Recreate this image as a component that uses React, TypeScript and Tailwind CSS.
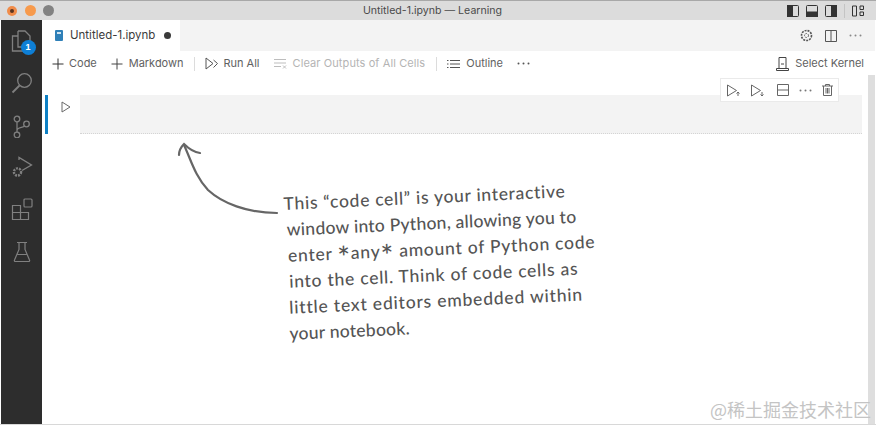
import { ReactNode } from 'react';

const Svg = ({ size = 16, w, h, children, className = '' }: { size?: number; w?: number; h?: number; children: ReactNode; className?: string }) => (
  <svg
    width={w ?? size}
    height={h ?? size}
    viewBox={`0 0 ${w ?? size} ${h ?? size}`}
    fill="none"
    stroke="currentColor"
    strokeWidth="1"
    className={`shrink-0 ${className}`}
  >
    {children}
  </svg>
);

const Plus = () => (
  <Svg size={12}>
    <path d="M6 0.5v11M0.5 6h11" />
  </Svg>
);

const Dots = ({ className = '' }: { className?: string }) => (
  <svg width="13" height="3" viewBox="0 0 13 3" fill="currentColor" className={`shrink-0 ${className}`}>
    <circle cx="1.5" cy="1.5" r="1" />
    <circle cx="6.5" cy="1.5" r="1" />
    <circle cx="11.5" cy="1.5" r="1" />
  </svg>
);

function ActivityBar() {
  return (
    <div className="w-[41px] ml-px shrink-0 bg-[#2d2d2d] flex flex-col items-center text-[#808080]">
      {/* explorer */}
      <div className="relative mt-[10px] h-[24px]">
        <Svg w={22} h={24}>
          <path d="M7 1h7l5 5v11h-5M7 1v5H1.5v15H14v-4M7 6v11h7" strokeWidth="1.3" />
        </Svg>
        <div className="absolute left-[10px] top-[10px] w-[15px] h-[15px] rounded-full bg-[#0e7fd6] text-white text-[9px] font-bold flex items-center justify-center font-['Liberation_Sans',sans-serif]">
          1
        </div>
      </div>
      {/* search */}
      <Svg w={22} h={22} className="mt-[18px]">
        <circle cx="13.5" cy="8.5" r="6.8" strokeWidth="1.3" />
        <path d="M8.5 13.5L1.5 20.5" strokeWidth="1.8" />
      </Svg>
      {/* source control */}
      <Svg w={20} h={23} className="mt-[21px]">
        <circle cx="5" cy="4" r="2.8" strokeWidth="1.3" />
        <circle cx="5" cy="20" r="2.8" strokeWidth="1.3" />
        <circle cx="14.5" cy="9" r="2.8" strokeWidth="1.3" />
        <path d="M5 7v10M5 15.5c0-3.5 6.5-2.5 7.5-4.5" strokeWidth="1.3" />
      </Svg>
      {/* run and debug */}
      <Svg w={22} h={22} className="mt-[18px]">
        <path d="M8 4V1.5L20.5 9 11 14.5" strokeWidth="1.3" />
        <circle cx="6.5" cy="16" r="3.6" strokeWidth="2.4" strokeDasharray="2 1" />
      </Svg>
      {/* extensions */}
      <Svg w={22} h={22} className="mt-[20px]">
        <path d="M1.5 7.5h8v14h-8zM1.5 14.5h16v7h-8M9.5 14.5v-7" strokeWidth="1.2" />
        <rect x="13" y="1" width="8" height="8" rx="1" strokeWidth="1.2" />
      </Svg>
      {/* testing flask */}
      <Svg w={18} h={22} className="mt-[21px]">
        <path d="M4 1.5h10M6 1.5v7L1.5 19a1 1 0 0 0 1 1.5h13a1 1 0 0 0 1-1.5L12 8.5v-7M4.5 13.5h9" strokeWidth="1.2" />
      </Svg>
    </div>
  );
}

function TitleBar() {
  return (
    <div className="h-[19px] shrink-0 bg-[#dcdcdc] flex items-center pl-[7px] pr-[12px]">
      <div className="w-[10px] h-[10px] rounded-full bg-[#f08c4a] flex items-center justify-center">
        <div className="w-[4px] h-[4px] rounded-full bg-[#5a3420]" />
      </div>
      <div className="w-[11px] h-[11px] rounded-full bg-[#f79a4c] ml-[8px]" />
      <div className="w-[11px] h-[11px] rounded-full bg-[#828282] ml-[7px]" />
      <div className="flex-1 text-center text-[10.6px] text-[#4a4a4a] pl-[24px]">Untitled-1.ipynb — Learning</div>
      <div className="flex items-center text-[#333]">
        <Svg w={12} h={12}>
          <rect x="0.5" y="0.5" width="11" height="11" rx="1" />
          <rect x="0.5" y="0.5" width="5" height="11" fill="currentColor" />
        </Svg>
        <Svg w={12} h={12} className="ml-[7px]">
          <rect x="0.5" y="0.5" width="11" height="11" rx="1" />
          <rect x="0.5" y="7" width="11" height="4.5" fill="currentColor" />
        </Svg>
        <Svg w={12} h={12} className="ml-[7px]">
          <rect x="0.5" y="0.5" width="11" height="11" rx="1" />
          <rect x="6.5" y="0.5" width="5" height="11" fill="currentColor" />
        </Svg>
        <div className="w-px h-[14px] bg-[#c4c4c4] ml-[7px]" />
        <Svg w={12} h={12} className="ml-[7px]">
          <path d="M0.5 1h4v10h-4zM8 1h3.5v3.5H8zM8 7h3.5v3.5H8z" />
        </Svg>
      </div>
    </div>
  );
}

function TabBar() {
  return (
    <div className="h-[31px] shrink-0 bg-[#f3f3f3] flex items-stretch">
      <div className="w-[138px] bg-white flex items-center pl-[13px]">
        <svg width="8" height="11" viewBox="0 0 8 11" className="shrink-0">
          <rect width="8" height="11" rx="1" fill="#2f80b8" />
          <rect x="2" y="2" width="4" height="2" fill="#cfe4f2" />
        </svg>
        <span className="ml-[7px] text-[11.5px] text-[#3b3b3b]">Untitled-1.ipynb</span>
        <div className="ml-[9px] w-[7px] h-[7px] rounded-full bg-[#3a3a3a]" />
      </div>
      <div className="flex-1" />
      <div className="flex items-center gap-[12px] pr-[13px] text-[#555]">
        <Svg w={13} h={13}>
          <circle cx="6.5" cy="6.5" r="2" strokeDasharray="1.5 1" />
          <circle cx="6.5" cy="6.5" r="5" strokeWidth="1.6" strokeDasharray="2 1" />
        </Svg>
        <Svg w={12} h={12}>
          <path d="M0.5 0.5h11v11h-11zM6 0.5v11" />
        </Svg>
        <Dots className="text-[#888]" />
      </div>
    </div>
  );
}

function Toolbar() {
  return (
    <div className="h-[23px] shrink-0 flex items-center pt-[2px] pl-[10px] pr-[11px] text-[11px] text-[#616161]">
      <span className="text-[#333]">
        <Plus />
      </span>
      <span className="ml-[5px]">Code</span>
      <span className="ml-[14px] text-[#444]">
        <Plus />
      </span>
      <span className="ml-[6px] tracking-[-0.03px]">Markdown</span>
      <div className="ml-[11px] w-px h-[14px] bg-[#dcdcdc]" />
      <Svg w={13} h={13} className="ml-[10px] text-[#555]">
        <path d="M1 1v11l7-5.5zM8.5 3l4 3.5-4 4" />
      </Svg>
      <span className="ml-[5px]">Run All</span>
      <Svg w={13} h={11} className="ml-[14px] text-[#bdbdbd]">
        <path d="M0 1.5h12M0 5h12M0 8.5h7M9 7.5l3 3M12 7.5l-3 3" />
      </Svg>
      <span className="ml-[6px] text-[#b4b4b4] tracking-[0.1px]">Clear Outputs of All Cells</span>
      <div className="ml-[11px] w-px h-[14px] bg-[#dcdcdc]" />
      <Svg w={13} h={10} className="ml-[10px] text-[#555]">
        <path d="M3 1.5h10M3 5h10M3 8.5h10M0 1.5h1.5M0 5h1.5M0 8.5h1.5" />
      </Svg>
      <span className="ml-[6px]">Outline</span>
      <Dots className="ml-[14px] text-[#555]" />
      <div className="flex-1" />
      <Svg w={13} h={14} className="text-[#444]">
        <path d="M3 0.5h7v11H3zM5 7h3M0.5 13.5h12" />
        <path d="M0.5 13.5v-2h2.5M12.5 13.5v-2H10" />
      </Svg>
      <span className="ml-[6px] text-[#616161]">Select Kernel</span>
    </div>
  );
}

function Cell() {
  return (
    <div className="relative mt-[21px] flex pl-[3px] pr-[13px]">
      <div className="w-[3px] h-[39px] bg-[#0e80c4]" />
      <div className="w-[32px] pl-[13px] pt-[6px] text-[#6a6a6a]">
        <Svg w={10} h={12}>
          <path d="M1 1v10l8-5z" />
        </Svg>
      </div>
      <div className="flex-1 h-[39px] bg-[#f3f3f3] border-b border-dotted border-[#d4d4d4]" />
      {/* cell toolbar */}
      <div className="absolute right-[36px] top-[-17px] h-[24px] w-[119px] bg-white border border-[#eaeaea] flex items-center pl-[6px] text-[#666]">
        <Svg w={14} h={13}>
          <path d="M0.5 1v11l9-5.5zM11 12V8M9.5 9.5L11 8l1.5 1.5" />
        </Svg>
        <Svg w={14} h={13} className="ml-[10px]">
          <path d="M0.5 1v11l9-5.5zM11 8v4M9.5 10.5L11 12l1.5-1.5" />
        </Svg>
        <Svg w={12} h={12} className="ml-[12px]">
          <path d="M0.5 0.5h11v11h-11zM0.5 6h11" />
        </Svg>
        <Dots className="ml-[10px] text-[#777]" />
        <Svg w={11} h={12} className="ml-[10px]">
          <path d="M0 2h11M3.5 2V0.5h4V2M1.5 2v9.5h8V2M4 4v5.5M5.5 4v5.5M7 4v5.5" />
        </Svg>
      </div>
    </div>
  );
}

const Star = () => <span className="text-[30px] leading-[0] align-[-9px]">*</span>;

const notes: { id: string; cls: string; content: ReactNode }[] = [
  { id: 'a', cls: 'tracking-[0.7px]', content: 'This “code cell” is your interactive' },
  { id: 'b', cls: 'ml-[2px] tracking-[0.25px]', content: 'window into Python, allowing you to' },
  {
    id: 'c',
    cls: 'ml-[2px] tracking-[0.75px]',
    content: (
      <>
        enter <Star />any<Star /> amount of Python code
      </>
    ),
  },
  { id: 'd', cls: 'ml-[2px] tracking-[0.75px]', content: 'into the cell. Think of code cells as' },
  { id: 'e', cls: 'ml-[1px] tracking-[0.8px]', content: 'little text editors embedded within' },
  { id: 'f', cls: 'tracking-[0.25px]', content: 'your notebook.' },
];

export default function App() {
  return (
    <div className="relative w-[876px] h-[425px] overflow-hidden bg-white flex flex-col border-t border-[#a8a8a8] font-['Inter','Liberation_Sans',sans-serif]">
      <TitleBar />
      <div className="flex flex-1 min-h-0">
        <ActivityBar />
        <div className="flex-1 min-w-0 flex flex-col pr-[1px]">
          <TabBar />
          <Toolbar />
          <Cell />
        </div>
      </div>

      {/* scrollbar edge */}
      <div className="absolute right-[1px] top-[74px] bottom-0 w-[7px] bg-[#dedede]" />
      <div className="absolute left-0 right-0 bottom-0 h-[1px] bg-[#d8d8d8]" />

      {/* hand drawn arrow */}
      <svg
        width="110"
        height="80"
        viewBox="0 0 110 80"
        fill="none"
        stroke="#666"
        strokeWidth="2.2"
        strokeLinecap="round"
        className="absolute left-[175px] top-[139px]"
      >
        <path d="M9 5C16 20 20 36 33 50 47 63 72 73 102 73" />
        <path d="M4 15C4 11 6 7 9 4 13 8 18 12 25 13" />
      </svg>

      {/* hand written note */}
      <div className="absolute left-[283px] top-[190px] -rotate-[2.6deg] origin-top-left text-[#555] text-[17.5px] leading-[26px] whitespace-nowrap font-['Lato',sans-serif] font-medium">
        {notes.map((n) => (
          <div key={n.id} className={n.cls}>
            {n.content}
          </div>
        ))}
      </div>

      {/* watermark */}
      <div className="absolute right-[5px] bottom-[5px] text-[18px] leading-[22px] text-[#c4c4c4] font-['Noto_Sans_CJK_SC',sans-serif]">
        @稀土掘金技术社区
      </div>
    </div>
  );
}
